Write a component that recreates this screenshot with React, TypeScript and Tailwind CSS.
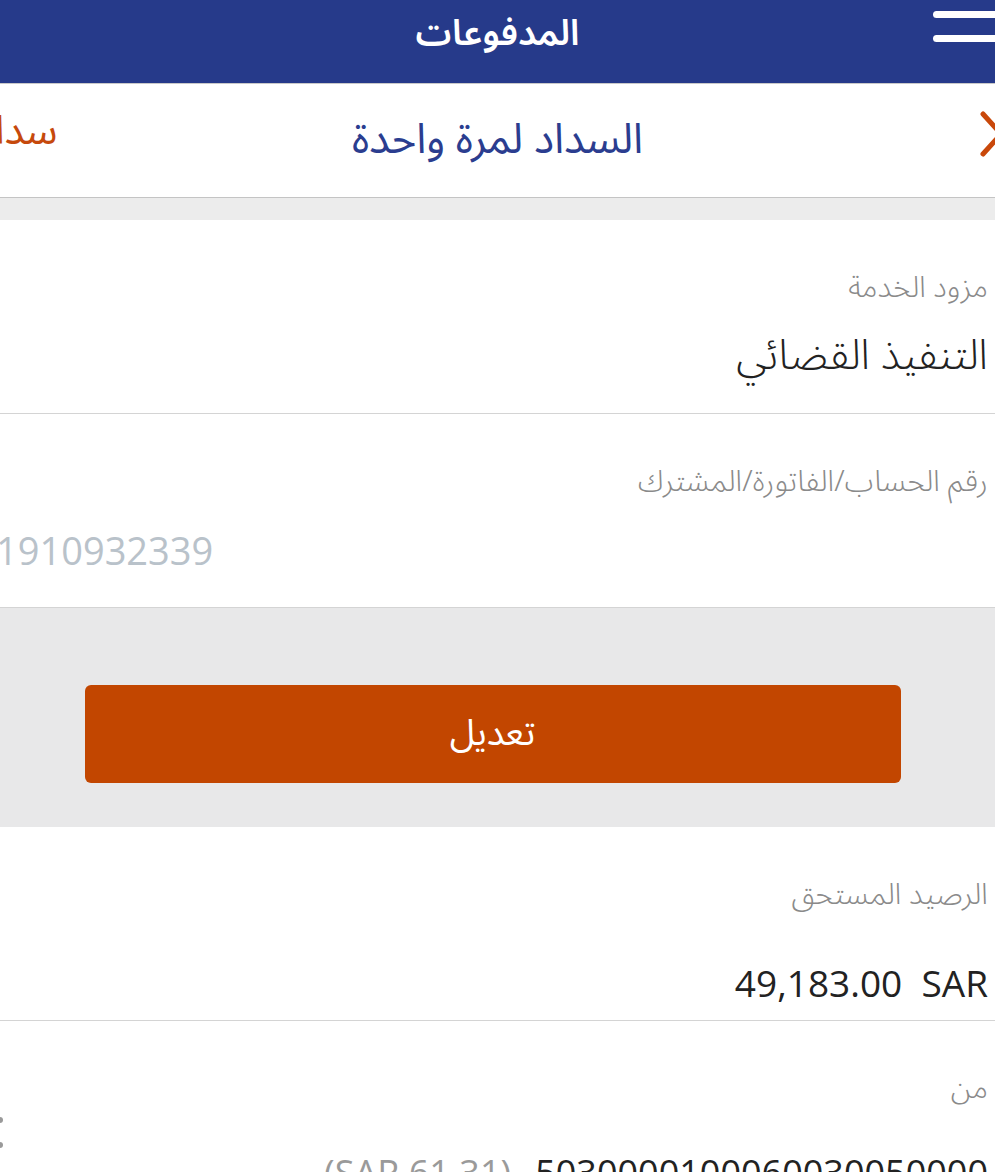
import React from "react";

const font = "font-['Noto_Sans_Arabic','Noto_Sans','DejaVu_Sans',sans-serif]";

function Field({
  label,
  gap,
  children,
}: {
  label: string;
  gap: string;
  children: React.ReactNode;
}) {
  return (
    <div className="h-[194px] border-b border-[#d4d4d4] bg-white pt-[44px] pr-[7px]">
      <div className="h-[48px] text-[30px] leading-[48px] font-light text-[#8a8a8a]">
        {label}
      </div>
      <div className={gap}>{children}</div>
    </div>
  );
}

export default function App() {
  return (
    <div dir="rtl" className={`h-[1172px] w-[995px] overflow-hidden bg-white ${font}`}>
      {/* شريط العنوان */}
      <header className="relative flex h-[84px] items-center justify-center border-b border-[#c9c9c9] bg-[#263a8a]">
        <h1 className="mb-[16px] text-[36px] leading-[52px] font-semibold text-white">المدفوعات</h1>
        <div className="absolute top-[11px] right-[-10px] flex flex-col gap-[17px]">
          <span className="block h-[7px] w-[72px] rounded-full bg-white" />
          <span className="block h-[7px] w-[72px] rounded-full bg-white" />
        </div>
      </header>

      {/* الشريط الفرعي */}
      <div className="relative flex h-[114px] items-center justify-center border-b border-[#c4c4c4] bg-white">
        <svg
          className="absolute top-[26px] right-[-28px]"
          width="44"
          height="48"
          viewBox="0 0 44 48"
        >
          <path
            d="M4 4 L40 44 M40 4 L4 44"
            stroke="#c9480a"
            strokeWidth="5"
            strokeLinecap="round"
            fill="none"
          />
        </svg>
        <h2 className="pb-[2px] text-[42px] leading-[60px] font-normal text-[#2b3d8f]">
          السداد لمرة واحدة
        </h2>
        <span className="absolute top-[18px] left-[-24px] text-[40px] leading-[60px] text-[#c6490c]">
          سداد
        </span>
      </div>

      <div className="h-[22px] bg-[#ececec]" />

      <Field label="مزود الخدمة" gap="mt-[14px]">
        <div className="h-[60px] text-[42px] leading-[60px] font-light text-[#222]">
          التنفيذ القضائي
        </div>
      </Field>

      <Field label="رقم الحساب/الفاتورة/المشترك" gap="mt-[14px]">
        <div
          dir="ltr"
          className="ml-[-4px] h-[60px] text-left font-['Open_Sans',sans-serif] text-[38px] leading-[60px] text-[#b9c2ca]"
        >
          1910932339
        </div>
      </Field>

      {/* زر التعديل */}
      <div className="flex h-[219px] items-center justify-center bg-[#e8e8e9] pt-[32px] pr-[10px]">
        <button className="h-[98px] w-[816px] rounded-[6px] bg-[#c24600] text-[36px] text-white">
          تعديل
        </button>
      </div>

      <Field label="الرصيد المستحق" gap="mt-[34px]">
        <div className="h-[60px] font-['Open_Sans',sans-serif] text-[37px] leading-[60px] text-[#222]">
          <span dir="ltr">49,183.00&nbsp;&nbsp;SAR</span>
        </div>
      </Field>

      <div className="relative h-[160px] bg-white pt-[44px] pr-[7px]">
        <div className="h-[48px] text-[30px] leading-[48px] font-light text-[#8a8a8a]">من</div>
        <div className="mt-[30px] flex h-[60px] items-center gap-[24px] font-['Open_Sans',sans-serif] text-[36px] leading-[60px]">
          <span className="text-[#222]">5030000100060030050000</span>
          <span dir="ltr" className="text-[#9a9a9a]">
            (SAR 61.31)
          </span>
        </div>
        <div className="absolute top-[96px] left-[-3px] flex flex-col gap-[19px]">
          <span className="block h-[6px] w-[6px] rounded-full bg-[#9a9a9a]" />
          <span className="block h-[6px] w-[6px] rounded-full bg-[#9a9a9a]" />
        </div>
      </div>
    </div>
  );
}
